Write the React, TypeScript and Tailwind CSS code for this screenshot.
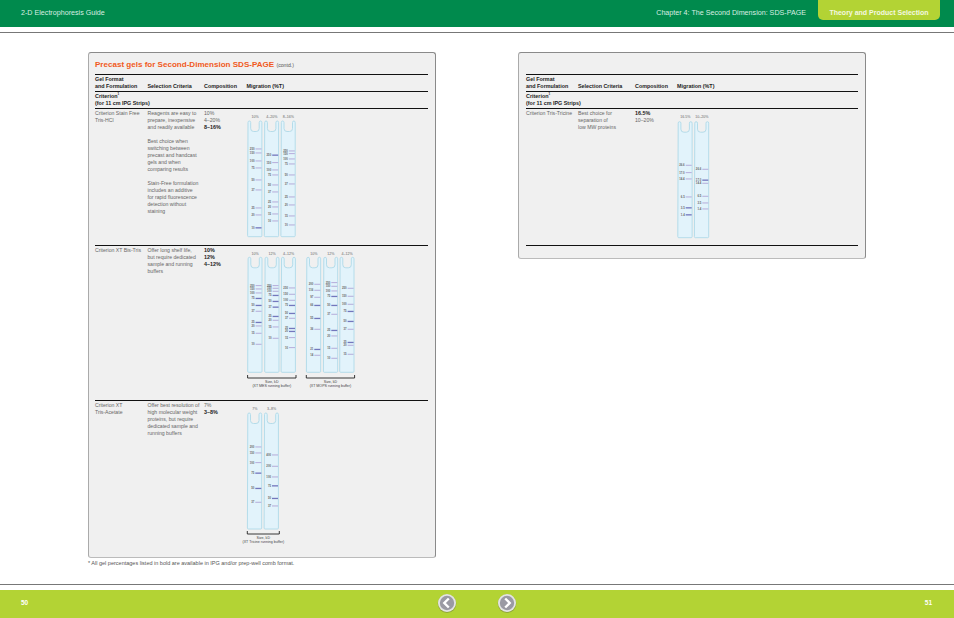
type Band = [number, string, boolean?]

interface Tube {
  x: number
  label: string
  bands: Band[]
}

interface Bracket {
  from: number
  to: number
  y: number
  lines: string[]
}

interface GelSetProps {
  width: number
  height: number
  top: number
  bottom: number
  tubes: Tube[]
  brackets?: Bracket[]
}

const tubePath = (x: number, top: number, bottom: number) =>
  `M${x + 0.5},${top + 1.5} q0,-1.5 1.3,-1.5 q1.4,0 1.4,1.5 v6 q0,3 3,3 h2.5 q3,0 3,-3 v-6 q0,-1.5 1.4,-1.5 q1.3,0 1.3,1.5 V${bottom - 1} q0,1 -1,1 h-12.3 q-1,0 -1,-1 Z`

const GelSet = ({ width, height, top, bottom, tubes, brackets = [] }: GelSetProps) => (
  <svg width={width} height={height} viewBox={`0 0 ${width} ${height}`} className="block overflow-visible">
    {tubes.map((t) => (
      <g key={t.x}>
        <text x={t.x + 7.6} y={4} fontSize="3.6" textAnchor="middle" fill="#666">{t.label}</text>
        <path d={tubePath(t.x, top, bottom)} fill="#e2f3fb" stroke="#b4dcea" strokeWidth="1" />
        {t.bands.map(([y, label, strong]) => (
          <g key={y}>
            <text x={t.x + 7} y={y + 1} fontSize="2.8" fontWeight="bold" textAnchor="end" fill="#666">{label}</text>
            <rect x={t.x + 8} y={y - 0.5} width={6} height={strong ? 1.3 : 0.9} fill={strong ? "#7377bd" : "#b0a4d6"} />
          </g>
        ))}
      </g>
    ))}
    {brackets.map((b) => (
      <g key={b.from}>
        <path d={`M${b.from},${b.y} v3 H${b.to} v-3`} fill="none" stroke="#222" strokeWidth="0.9" />
        {b.lines.map((line, i) => (
          <text key={line} x={(b.from + b.to) / 2} y={b.y + 7.5 + i * 4.6} fontSize="3.6" textAnchor="middle" fill="#444">{line}</text>
        ))}
      </g>
    ))}
  </svg>
)

const TableHead = ({ cols }: { cols: string }) => (
  <>
    <div className={`h-[17px] border-t border-[#111] grid ${cols} items-end pb-[1px] text-[5.4px] leading-[7px] font-bold text-[#222]`}>
      <div>Gel Format<br />and Formulation</div>
      <div>Selection Criteria</div>
      <div>Composition</div>
      <div>Migration (%T)</div>
    </div>
    <div className="h-[17px] border-t border-[#111] pt-[1px] text-[5.4px] leading-[7px] font-bold text-[#222]">
      Criterion<span className="text-[3px] align-top leading-none">1</span><br />(for 11 cm IPG Strips)
    </div>
  </>
)

interface RowProps {
  height: string
  cols: string
  name: string[]
  criteria: string[]
  comp: [string, boolean?][]
  children: React.ReactNode
}

const Row = ({ height, cols, name, criteria, comp, children }: RowProps) => (
  <div className={`${height} border-t border-[#111] grid ${cols} text-[5.15px] leading-[7px] text-[#666]`}>
    <div className="pt-[1px]">{name.map((n) => <div key={n}>{n}</div>)}</div>
    <div className="pt-[1px]">
      {criteria.map((c, i) => <div key={i} className="h-[7px]">{c}</div>)}
    </div>
    <div className="pt-[1px]">
      {comp.map(([c, bold]) => <div key={c} className={bold ? "font-bold text-[#222] text-[5.4px]" : ""}>{c}</div>)}
    </div>
    <div className="pt-[5px]">{children}</div>
  </div>
)

const NavButton = ({ dir }: { dir: "left" | "right" }) => (
  <svg width="20" height="20" viewBox="0 0 20 20" className="block">
    <circle cx="10" cy="10.6" r="9.3" fill="#6f7a45" opacity="0.5" />
    <circle cx="10" cy="10" r="9" fill="#e4e4e4" />
    <circle cx="10" cy="10" r="7.2" fill="#9a9aa3" />
    <path d={dir === "left" ? "M11.8,5.5 L7.3,10 L11.8,14.5" : "M8.2,5.5 L12.7,10 L8.2,14.5"} fill="none" stroke="#fff" strokeWidth="2.4" />
  </svg>
)

const p = (label: string, y: number, strong?: boolean): Band => [y, label, strong]

const leftCols = "grid-cols-[52.5px_56.5px_42.5px_1fr]"
const rightCols = "grid-cols-[52px_57px_42px_1fr]"

export default function App() {
  return (
    <div className="w-[954px] h-[618px] flex flex-col bg-white overflow-hidden font-['Liberation_Sans',Arial,sans-serif]">
      <header className="h-[27px] shrink-0 bg-[#008a4d] flex items-start justify-between pl-[21px] pr-[14px] text-[7.15px] text-[#d9eee2]">
        <span className="mt-[9px] leading-[9px]">2-D Electrophoresis Guide</span>
        <div className="flex items-start">
          <span className="mt-[9px] leading-[9px] mr-[12px]">Chapter 4: The Second Dimension: SDS-PAGE</span>
          <div className="w-[122px] h-[20px] bg-[#b3d334] rounded-b-[5px] pt-[7.5px] text-center text-[7px] leading-[9px] font-bold text-[#f4f8e0]">
            Theory and Product Selection
          </div>
        </div>
      </header>
      <div className="h-[1px] mt-[5px] shrink-0 bg-[#777]" />

      <main className="flex-1 flex items-start pl-[88px] pt-[19px] gap-[82px]">
        <div className="w-[348px]">
          <section className="h-[506px] bg-[#f0f0f0] border border-[#8a8a8a] border-l-[#aaa] border-b-[#bbb] rounded-[3px] pl-[6px] pr-[7px]">
            <h2 className="h-[21px] pt-[7px] text-[8.05px] leading-[10px] font-bold text-[#f15a22] whitespace-nowrap">
              Precast gels for Second-Dimension SDS-PAGE <span className="text-[5.2px] font-normal text-[#555]">(contd.)</span>
            </h2>
            <TableHead cols={leftCols} />
            <Row
              height="h-[137px]"
              cols={leftCols}
              name={["Criterion Stain Free", "Tris-HCl"]}
              criteria={[
                "Reagents are easy to", "prepare, inexpensive", "and readily available", "",
                "Best choice when", "switching between", "precast and handcast", "gels and when", "comparing results", "",
                "Stain-Free formulation", "includes an additive", "for rapid fluorescence", "detection without", "staining",
              ]}
              comp={[["10%"], ["4–20%"], ["8–16%", true]]}
            >
              <GelSet
                width={60}
                height={125}
                top={7}
                bottom={122.7}
                tubes={[
                  { x: 0.5, label: "10%", bands: [p("250", 35), p("150", 39), p("100", 47), p("75", 54), p("50", 66), p("37", 76), p("25", 94), p("20", 101), p("10", 113.7, true)] },
                  { x: 17.2, label: "4–20%", bands: [p("250", 41, true), p("150", 48.7), p("100", 56), p("75", 61), p("50", 71), p("37", 78), p("25", 88), p("20", 93), p("15", 100), p("10", 107)] },
                  { x: 33.8, label: "8–16%", bands: [p("250", 37), p("150", 39.7), p("100", 45), p("75", 50), p("50", 61), p("37", 70), p("25", 83), p("20", 91), p("15", 102), p("10", 111)] },
                ]}
              />
            </Row>
            <Row
              height="h-[155px]"
              cols={leftCols}
              name={["Criterion XT Bis-Tris"]}
              criteria={["Offer long shelf life,", "but require dedicated", "sample and running", "buffers"]}
              comp={[["10%", true], ["12%", true], ["4–12%", true]]}
            >
              <GelSet
                width={110}
                height={140}
                top={6.3}
                bottom={121.3}
                tubes={[
                  { x: 0.6, label: "10%", bands: [p("250", 34.7), p("150", 38), p("100", 42), p("75", 47.3, true), p("50", 54.3, true), p("37", 60.3), p("25", 71.3, true), p("20", 75), p("15", 82.3), p("10", 93.3)] },
                  { x: 17.6, label: "12%", bands: [p("250", 34.7), p("150", 37.3), p("100", 40.3), p("75", 44.3, true), p("50", 50.3, true), p("37", 56, true), p("25", 65.3, true), p("20", 69.3), p("15", 76), p("10", 87.3)] },
                  { x: 34, label: "4–12%", bands: [p("250", 37), p("150", 43.3), p("100", 49.3), p("75", 54.3, true), p("50", 62.3, true), p("37", 67.3), p("25", 77.3, true), p("20", 80.3, true), p("15", 86.7), p("10", 96.7)] },
                  { x: 59.3, label: "10%", bands: [p("200", 33.3), p("116", 39.3), p("97", 46.3), p("66", 54.3, true), p("55", 67.3, true), p("36", 78.3), p("21", 98.3, true), p("14", 104.3)] },
                  { x: 76.3, label: "12%", bands: [p("250", 31.7), p("150", 35.3), p("100", 40), p("75", 45.3, true), p("50", 54.3, true), p("37", 63.3), p("25", 79.3, true), p("20", 85), p("15", 97.3), p("10", 107.3)] },
                  { x: 92.6, label: "4–12%", bands: [p("250", 37.3), p("150", 45.3), p("100", 53.3), p("75", 60.3, true), p("50", 70.3, true), p("37", 78.3), p("25", 91.3, true), p("20", 94.3), p("15", 103.3)] },
                ]}
                brackets={[
                  { from: 0.6, to: 49, y: 124, lines: ["Size, kD", "(XT MES running buffer)"] },
                  { from: 59.3, to: 107.6, y: 124, lines: ["Size, kD", "(XT MOPS running buffer)"] },
                ]}
              />
            </Row>
            <Row
              height="h-[157px]"
              cols={leftCols}
              name={["Criterion XT", "Tris-Acetate"]}
              criteria={["Offer best resolution of", "high molecular weight", "proteins, but require", "dedicated sample and", "running buffers"]}
              comp={[["7%"], ["3–8%", true]]}
            >
              <GelSet
                width={60}
                height={145}
                top={7}
                bottom={123}
                tubes={[
                  { x: 0.3, label: "7%", bands: [p("200", 41), p("150", 47), p("100", 56.7), p("75", 67, true), p("50", 82.3, true), p("37", 96.3)] },
                  { x: 17, label: "3–8%", bands: [p("400", 49), p("200", 60.3), p("100", 71), p("75", 79.7, true), p("50", 92.3, true), p("37", 100)] },
                ]}
                brackets={[{ from: 0.3, to: 32.3, y: 125, lines: ["Size, kD", "(XT Tricine running buffer)"] }]}
              />
            </Row>
          </section>
          <p className="mt-[2px] text-[5.5px] leading-[7px] text-[#555]">* All gel percentages listed in bold are available in IPG and/or prep-well comb format.</p>
        </div>

        <section className="w-[348px] h-[207px] bg-[#f0f0f0] border border-[#8a8a8a] border-l-[#aaa] border-b-[#bbb] rounded-[3px] px-[7px]">
          <div className="h-[21px]" />
          <TableHead cols={rightCols} />
          <Row
            height="h-[137px]"
            cols={rightCols}
            name={["Criterion Tris-Tricine"]}
            criteria={["Best choice for", "separation of", "low MW proteins"]}
            comp={[["16.5%", true], ["10–20%"]]}
          >
            <GelSet
              width={40}
              height={125}
              top={7.7}
              bottom={123.7}
              tubes={[
                { x: 0.7, label: "16.5%", bands: [p("26.6", 51.3), p("17.0", 58.7), p("14.4", 65), p("6.5", 83), p("3.5", 93.7, true), p("1.4", 100.7, true)] },
                { x: 17.3, label: "10–20%", bands: [p("26.6", 55.3), p("17.0", 66, true), p("14.4", 69.3), p("6.5", 82.3), p("3.5", 89), p("1.4", 95)] },
              ]}
            />
          </Row>
          <div className="border-t border-[#111]" />
        </section>
      </main>

      <div className="h-[1px] shrink-0 bg-[#777]" />
      <footer className="h-[28px] mt-[5px] shrink-0 bg-[#b3d334] flex items-center px-[21px] pb-[2px] text-[6.5px] font-bold text-white">
        <span className="w-[416px]">50</span>
        <NavButton dir="left" />
        <span className="w-[40px]" />
        <NavButton dir="right" />
        <span className="flex-1 text-right pr-[1px]">51</span>
      </footer>
    </div>
  )
}
